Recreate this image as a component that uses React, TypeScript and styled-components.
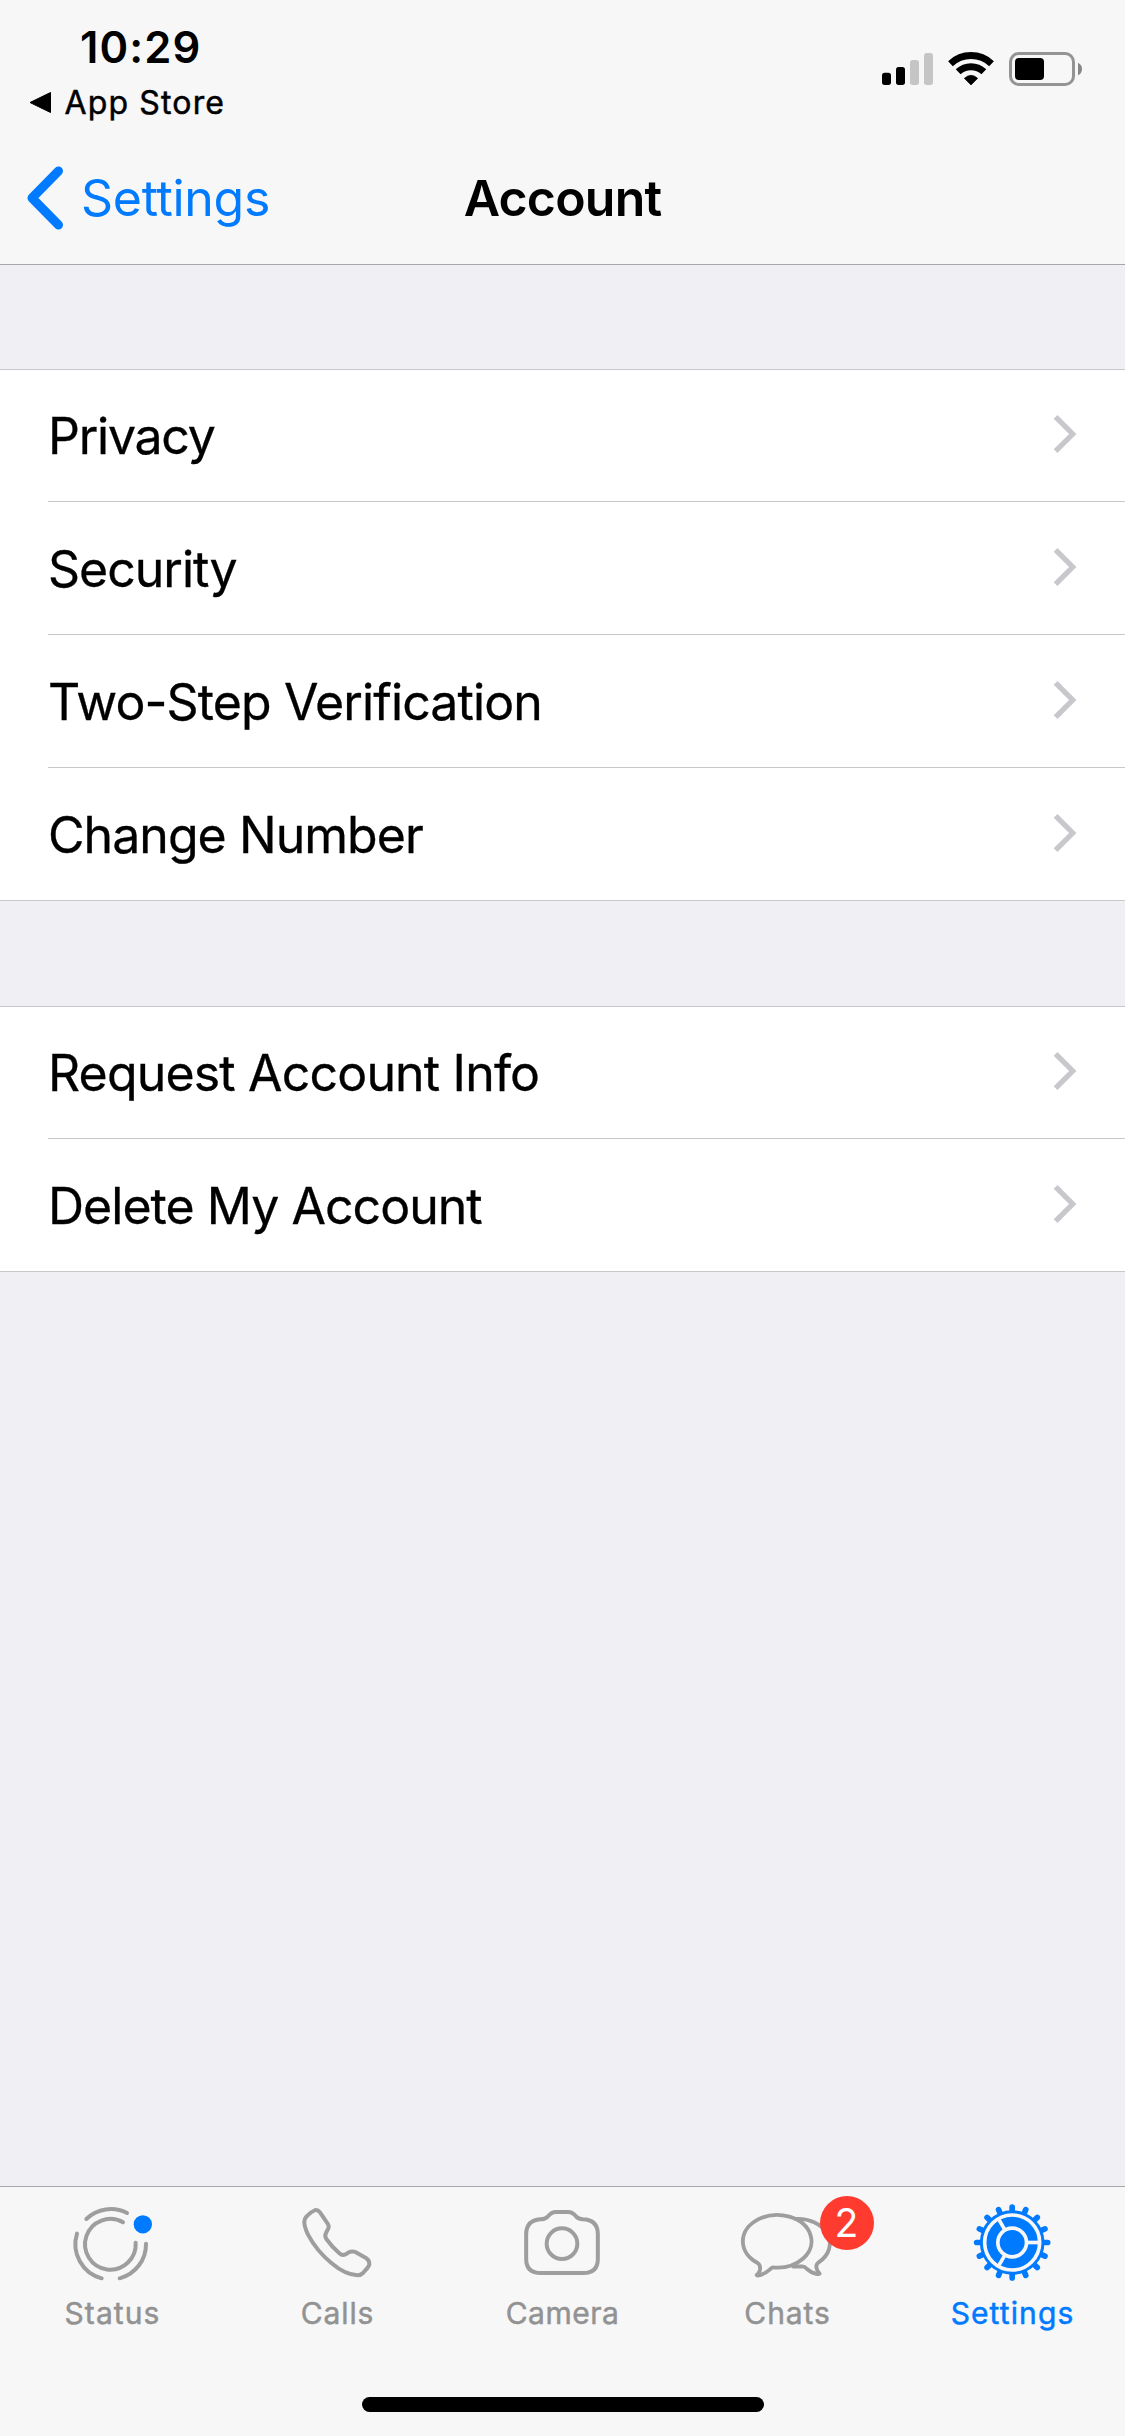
import React from "react";
import styled, { createGlobalStyle } from "styled-components";

const GlobalStyle = createGlobalStyle`
  *, *::before, *::after { box-sizing: border-box; }
  body {
    margin: 0;
    background: #efeff4;
    font-family: Inter, "Liberation Sans", sans-serif;
    color: #000;
  }
`;

const BLUE = "#007aff";
const GREY = "#929292";

const Screen = styled.div`
  width: 1125px;
  height: 2436px;
  display: flex;
  flex-direction: column;
  background: #efeff4;
  overflow: hidden;
`;

const Header = styled.header`
  flex: none;
  height: 265px;
  background: #f7f7f7;
  border-bottom: 1px solid #a7a7aa;
`;

const StatusBar = styled.div`
  height: 132px;
  display: flex;
  justify-content: space-between;
  padding: 27px 43px 0 29px;
`;

const StatusLeft = styled.div`
  display: flex;
  flex-direction: column;
`;

const Time = styled.div`
  height: 40px;
  line-height: 40px;
  padding-left: 51px;
  font-size: 43.5px;
  font-weight: 600;
  letter-spacing: 1.1px;
`;

const ReturnLink = styled.div`
  display: flex;
  align-items: center;
  gap: 13.5px;
  height: 40px;
  margin-top: 15px;
  font-size: 32px;
  letter-spacing: 1.15px;
  -webkit-text-stroke: 0.5px currentColor;
`;

const StatusRight = styled.div`
  display: flex;
  gap: 15px;
  padding-top: 25px;
  height: 59px;
`;

const Nav = styled.nav`
  height: 132px;
  display: grid;
  grid-template-columns: 1fr auto 1fr;
  align-items: center;
`;

const BackLink = styled.div`
  display: flex;
  align-items: center;
  gap: 17px;
  padding-left: 26px;
  font-size: 50px;
  letter-spacing: -0.3px;
  color: ${BLUE};
`;

const Title = styled.h1`
  margin: 0;
  font-size: 50px;
  font-weight: 600;
  letter-spacing: -0.8px;
`;

const Content = styled.main`
  flex: 1;
  padding-top: 104px;
  display: flex;
  flex-direction: column;
  gap: 105px;
`;

const Group = styled.section`
  background: #fff;
  border-top: 1px solid #c8c7cc;
  border-bottom: 1px solid #c8c7cc;
  padding-left: 48px;
`;

const Row = styled.div`
  height: 133px;
  display: flex;
  align-items: center;
  justify-content: space-between;
  padding: 1px 48px 0 0;
  font-size: 50px;
  border-bottom: 1px solid #c8c7cc;
  &:first-child { height: 132px; padding-top: 0; }
  &:last-child { height: 132px; border-bottom: 0; }
`;

const RowLabel = styled.span<{ $tracking: number }>`
  letter-spacing: ${(p) => p.$tracking}px;
  -webkit-text-stroke: 0.3px currentColor;
`;

const RowChevron = styled.svg`
  margin-bottom: 4px;
`;

const TabBar = styled.footer`
  flex: none;
  height: 250px;
  background: #f7f7f7;
  border-top: 1px solid #a7a7aa;
  display: flex;
  flex-direction: column;
  align-items: center;
  justify-content: space-between;
  padding: 13px 0 24px;
`;

const Tabs = styled.div`
  width: 100%;
  display: grid;
  grid-template-columns: repeat(5, 1fr);
`;

const Tab = styled.div<{ $active?: boolean }>`
  display: flex;
  flex-direction: column;
  align-items: center;
  color: ${(p) => (p.$active ? BLUE : GREY)};
`;

const IconBox = styled.div`
  position: relative;
  width: 96px;
  height: 84px;
  color: ${BLUE};
`;

const TabLabel = styled.span<{ $tracking: number }>`
  margin-top: 9px;
  line-height: 40px;
  font-size: 30px;
  font-weight: 400;
  letter-spacing: ${(p) => p.$tracking}px;
  -webkit-text-stroke: 0.5px currentColor;
`;

const Badge = styled.span`
  position: absolute;
  left: 80px;
  top: -4px;
  width: 54px;
  height: 54px;
  border-radius: 50%;
  background: #ff3b30;
  color: #fff;
  font-size: 39px;
  line-height: 53px;
  text-align: center;
`;

const HomeIndicator = styled.div`
  width: 402px;
  height: 15px;
  border-radius: 8px;
  background: #000;
`;

const Signal = () => (
  <svg width="51" height="34" viewBox="126 96 153 102">
    <rect x="126" y="158" width="27" height="37" rx="8" />
    <rect x="168" y="141" width="27" height="54" rx="8" />
    <rect x="210" y="120" width="27" height="75" rx="8" fill="#c5c5c5" />
    <rect x="252" y="99" width="27" height="96" rx="8" fill="#c5c5c5" />
  </svg>
);

const Wifi = () => (
  <svg width="46" height="34" viewBox="324 96 138 102">
    <g fill="none" stroke="#000">
      <path d="M331.4 131.1A89.5 89.5 0 0 1 454.6 131.1" strokeWidth="20.5" />
      <path d="M354.5 155.4A56 56 0 0 1 431.5 155.4" strokeWidth="21" />
    </g>
    <path d="M393 195L373 175Q393 157 413 175Z" stroke="#000" strokeWidth="2" strokeLinejoin="round" />
  </svg>
);

const Battery = () => (
  <svg width="73" height="34" viewBox="507 96 219 102">
    <rect x="511.5" y="100.5" width="189" height="93" rx="25" fill="none" stroke="#949494" strokeWidth="9" />
    <rect x="525" y="114" width="87" height="66" rx="12" />
    <path d="M714 128Q726 134 726 147T714 166Z" fill="#868686" />
  </svg>
);

const StatusIcon = () => (
  <svg width="96" height="84" viewBox="75 90 288 252" fill="none" stroke="#9e9e9e" strokeWidth="12" strokeLinecap="round">
    <path d="M139 147A106 106 0 0 1 261 129" />
    <path d="M111 191A106 106 0 0 0 185 325" />
    <path d="M318 221A106 106 0 0 1 239 325" />
    <path d="M249 157A76 76 0 1 0 287 218" />
    <circle cx="308.5" cy="163" r="27.5" fill={BLUE} stroke="none" />
  </svg>
);

const CallsIcon = () => (
  <svg width="96" height="84" viewBox="60 90 288 252" fill="none" stroke="#9e9e9e" strokeWidth="12" strokeLinejoin="round">
    <path d="M136 120Q144 119 150 127L173 161Q178 168 175 175L168 189Q163 198 169 207Q188 233 208 250Q217 258 227 253L236 247Q246 242 256 246L288 264Q299 271 298 284Q296 291 279 309Q272 316 262 316Q225 314 185 280Q140 243 114 194Q102 168 103 155Q103 147 109 140Q121 126 136 120Z" />
  </svg>
);

const CameraIcon = () => (
  <svg width="96" height="84" viewBox="105 90 288 252" fill="none" stroke="#9e9e9e" strokeWidth="12">
    <path d="M182 309Q138.5 309 138.5 266V193Q138.5 151 181 148Q196 148 204 139Q214 126 228 126H264Q278 126 288 139Q295 147 308 148Q353.5 149 353.5 193V266Q353.5 309 310 309Z" />
    <circle cx="246" cy="221" r="46" />
  </svg>
);

const ChatsIcon = () => (
  <svg width="96" height="84" viewBox="90 90 288 252" fill="none" stroke="#9e9e9e" strokeWidth="11.5" strokeLinejoin="round">
    <path d="M254 147A95 74 0 0 1 326 277Q318 283 319 293Q321 303 329 311Q328 314 316 311Q302 307 291 297Q284 289 277 289Q258 290 245 289" />
    <path d="M189 292.4A103 79 0 1 0 143 279Q152 285 150 299Q147 311 140 315Q141 319 152 315Q168 309 179 299Q185 293 189 292.4Z" />
  </svg>
);

const TEETH = Array.from({ length: 16 }, (_, i) => i * 22.5);

const SettingsIcon = () => (
  <svg width="96" height="84" viewBox="105 90 288 252">
    <g transform="translate(246.5 217.5)" fill="none" stroke={BLUE}>
      {TEETH.map((a) => (
        <path key={a} d="M92 0H106.5" strokeWidth="17" strokeLinecap="round" transform={`rotate(${a})`} />
      ))}
      <circle r="97" fill={BLUE} stroke="none" />
      <g stroke="#f7f7f7" strokeWidth="11">
        <circle r="82.5" />
        <circle r="43" />
        {[0, 120, 240].map((a) => (
          <path key={a} d="M43 0H82" transform={`rotate(${a})`} />
        ))}
      </g>
    </g>
  </svg>
);

const TABS = [
  { label: "Status", Icon: StatusIcon, tracking: 1.1 },
  { label: "Calls", Icon: CallsIcon, tracking: 0.9 },
  { label: "Camera", Icon: CameraIcon, tracking: 0.5 },
  { label: "Chats", Icon: ChatsIcon, badge: "2", tracking: 0.9 },
  { label: "Settings", Icon: SettingsIcon, active: true, tracking: 1.1 },
];

const GROUPS = [
  [
    { label: "Privacy", tracking: -1.25 },
    { label: "Security", tracking: -1 },
    { label: "Two-Step Verification", tracking: -0.88 },
    { label: "Change Number", tracking: -0.95 },
  ],
  [
    { label: "Request Account Info", tracking: -0.83 },
    { label: "Delete My Account", tracking: -0.97 },
  ],
];

export default function App() {
  return (
    <>
      <GlobalStyle />
      <Screen>
        <Header>
          <StatusBar>
            <StatusLeft>
              <Time>10:29</Time>
              <ReturnLink>
                <svg width="22" height="23" viewBox="0 0 22 23">
                  <path d="M21.5 1.5V21.5L1 11.5Z" stroke="#000" strokeLinejoin="round" />
                </svg>
                App Store
              </ReturnLink>
            </StatusLeft>
            <StatusRight>
              <Signal />
              <Wifi />
              <Battery />
            </StatusRight>
          </StatusBar>
          <Nav>
            <BackLink>
              <svg width="38" height="64" viewBox="0 0 38 64" fill="none" stroke={BLUE} strokeWidth="9" strokeLinecap="round" strokeLinejoin="round">
                <path d="M32.5 5L6 32L32.5 59" />
              </svg>
              Settings
            </BackLink>
            <Title>Account</Title>
          </Nav>
        </Header>
        <Content>
          {GROUPS.map((rows) => (
            <Group key={rows[0].label}>
              {rows.map((r) => (
                <Row key={r.label}>
                  <RowLabel $tracking={r.tracking}>{r.label}</RowLabel>
                  <RowChevron width="24" height="40" viewBox="0 0 24 40" fill="none" stroke="#c7c7cc" strokeWidth="5.3">
                    <path d="M2.6 2.8L19.7 20L2.6 37.2" />
                  </RowChevron>
                </Row>
              ))}
            </Group>
          ))}
        </Content>
        <TabBar>
          <Tabs>
            {TABS.map(({ label, Icon, badge, active, tracking }) => (
              <Tab key={label} $active={active}>
                <IconBox>
                  <Icon />
                  {badge && <Badge>{badge}</Badge>}
                </IconBox>
                <TabLabel $tracking={tracking}>{label}</TabLabel>
              </Tab>
            ))}
          </Tabs>
          <HomeIndicator />
        </TabBar>
      </Screen>
    </>
  );
}
